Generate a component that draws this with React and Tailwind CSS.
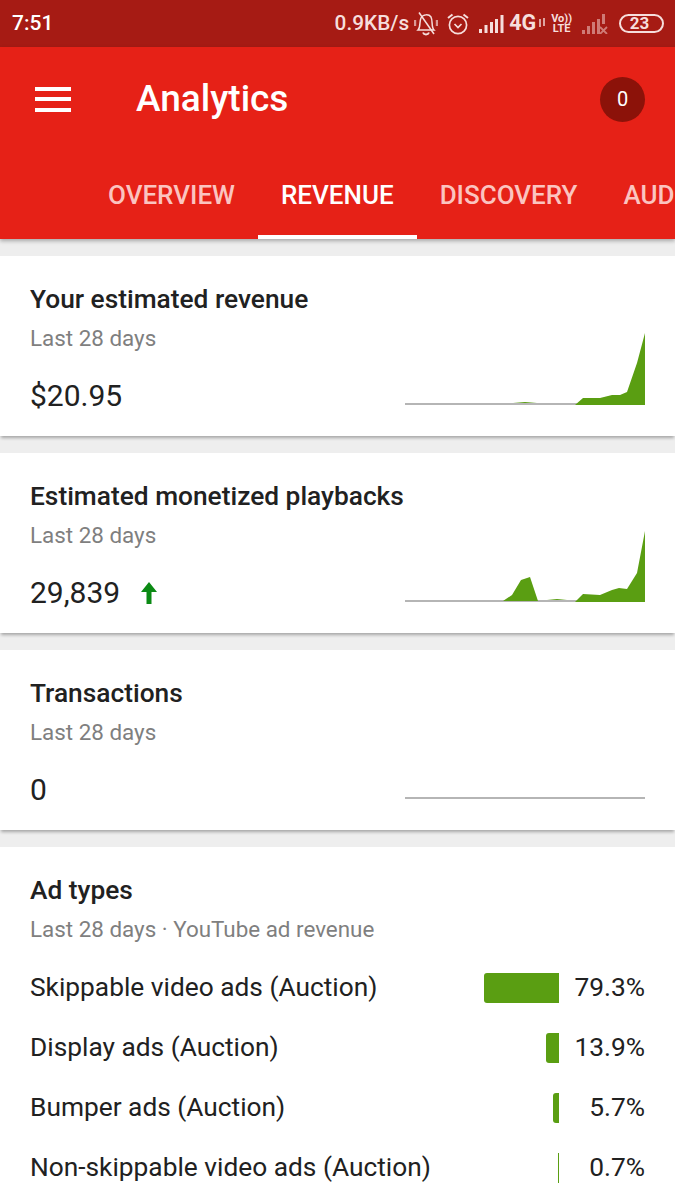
import React from "react";

const TABS = [
  { label: "OVERVIEW" },
  { label: "REVENUE", active: true },
  { label: "DISCOVERY" },
  { label: "AUDIENCE" },
];

const AD_TYPES = [
  { name: "Skippable video ads (Auction)", pct: "79.3%", bar: "w-[75px] rounded-l-[3px]" },
  { name: "Display ads (Auction)", pct: "13.9%", bar: "w-[13px] rounded-l-[3px]" },
  { name: "Bumper ads (Auction)", pct: "5.7%", bar: "w-[6px] rounded-l-[3px]" },
  { name: "Non-skippable video ads (Auction)", pct: "0.7%", bar: "w-px" },
];

// paths are in chart space, 240 wide and 72 tall
const REVENUE_AREA = "M108 70 L120 69 L132 70 Z M170 72 L178 65 L195 65 L207 62 L215 62 L222 59 L232 30 L240 0 L240 72 Z";
const PLAYBACK_AREA = "M98 71 L107 65 L116 50 L125 47 L133 71 Z M142 70 L152 69 L162 70 Z M170 72 L178 64 L195 65 L207 60 L214 58 L222 59 L232 43 L240 1 L240 72 Z";

function Spark({ area }) {
  return (
    <svg width="240" height="72" viewBox="0 0 240 72" className="block">
      <rect x="0" y="70" width="240" height="2" fill="#b5b5b5" />
      {area && <path d={area} fill="#5a9e12" />}
    </svg>
  );
}

function StatusBar() {
  return (
    <div className="h-[47px] bg-[#a61b14] flex items-center text-[#f6dedc] font-medium">
      <span className="ml-[12px] text-[21px] text-white">7:51</span>
      <div className="ml-auto flex items-center mr-[11px]">
        <span className="text-[20.8px] mr-[5px]">0.9KB/s</span>
        {/* muted bell */}
        <svg width="24" height="26" viewBox="0 0 24 26" fill="none" stroke="#f6dedc" strokeWidth="1.5" className="mr-[8px]">
          <path d="M4 19 C7 16 5 11 7 7 C9 3 15 3 17 6 C19 10 17 16 20 19 Z" />
          <path d="M9 21.5 C10 24 14 24 15 21.5" strokeWidth="2" />
          <path d="M5 1.5 L20 23" />
          <path d="M1 9 V15 M23 9 V15" strokeWidth="2.4" opacity="0.65" />
        </svg>
        {/* alarm */}
        <svg width="24" height="24" viewBox="0 0 24 24" fill="none" stroke="#f6dedc" strokeWidth="1.7" className="mr-[9px]">
          <circle cx="12" cy="13" r="8.6" />
          <path d="M8.5 12 L12 15.5 L15.5 12" />
          <path d="M2 6 L6.5 2.5 M22 6 L17.5 2.5" strokeWidth="2" />
        </svg>
        {/* signal */}
        <svg width="25" height="18" viewBox="0 0 25 18" fill="#f6dedc" className="mr-[5px]">
          <rect x="0" y="14" width="3" height="4" />
          <rect x="5.5" y="10" width="3" height="8" />
          <rect x="11" y="7" width="3" height="11" />
          <rect x="16" y="4" width="3" height="14" />
          <rect x="21.5" y="0" width="3" height="18" />
        </svg>
        <span className="text-[21.5px] font-bold">4G</span>
        {/* up and down arrows next to 4G */}
        <svg width="8" height="9" viewBox="0 0 8 9" fill="none" stroke="#f6dedc" strokeWidth="1.4" className="ml-[2px] mr-[5px] self-end mb-[13px]">
          <path d="M2 9 V1 M6 0 V8" />
        </svg>
        <div className="flex flex-col items-center leading-[10px] text-[11px] font-bold mr-[10px]">
          <span>Vo))</span>
          <span>LTE</span>
        </div>
        {/* second signal, no service */}
        <svg width="26" height="20" viewBox="0 0 26 20" fill="#cf7b76" className="mr-[11px]">
          <rect x="0" y="16" width="3" height="4" />
          <rect x="5" y="12" width="3" height="8" />
          <rect x="10" y="8" width="3" height="12" />
          <rect x="15" y="5" width="3" height="15" />
          <rect x="20" y="0" width="3" height="10" />
          <path d="M18 13 L25 20 M25 13 L18 20" stroke="#cf7b76" strokeWidth="1.8" />
        </svg>
        <div className="w-[45px] h-[19px] border-2 border-[#f6dedc] rounded-full flex items-center justify-center text-[17px] leading-none font-bold pr-[4px]">
          23
        </div>
      </div>
    </div>
  );
}

function Header() {
  return (
    <div className="bg-[#e62117] relative z-10 shadow-[0_2px_4px_rgba(0,0,0,0.3)] h-[192px] flex flex-col">
      <div className="flex items-center h-[104px]">
        <div className="ml-[35px] w-[36px] flex flex-col gap-[6.5px]">
          <div className="h-[4px] bg-white" />
          <div className="h-[4px] bg-white" />
          <div className="h-[4px] bg-white" />
        </div>
        <span className="ml-[65px] text-[37px] font-medium text-white">Analytics</span>
        <div className="ml-auto mr-[30px] w-[45px] h-[45px] rounded-full bg-[#8c1209] flex items-center justify-center text-white text-[20px]">
          0
        </div>
      </div>
      <div className="mt-auto flex pl-[85px] overflow-hidden whitespace-nowrap">
        {TABS.map((tab) => (
          <div
            key={tab.label}
            className={`h-[75px] px-[23px] pb-[8px] flex items-center text-[26px] font-medium border-b-[4px] ${
              tab.active ? "text-white border-white" : "text-[#fbc4c0] border-transparent"
            }`}
          >
            {tab.label}
          </div>
        ))}
      </div>
    </div>
  );
}

function MetricCard({ title, value, area, up }) {
  return (
    <div className="bg-white h-[180px] pl-[30px] pr-[30px] pt-[27px] flex shadow-[0_3px_3px_-1px_rgba(0,0,0,0.3)] relative">
      <div className="flex-1 min-w-0">
        <div className="text-[26.3px] leading-[33px] font-medium text-[#212121] whitespace-nowrap">{title}</div>
        <div className="mt-[7px] text-[22.4px] leading-[30px] text-[#7f7f7f]">Last 28 days</div>
        <div className="mt-[23px] flex items-center gap-[21px] text-[30px] leading-[40px] text-[#212121]">
          {value}
          {up && (
            <svg width="16" height="22" viewBox="0 0 16 22" fill="#0b8a14">
              <path d="M8 0 L16 10 H10.5 V22 H5.5 V10 H0 Z" />
            </svg>
          )}
        </div>
      </div>
      <div className="mt-[50px]">
        <Spark area={area} />
      </div>
    </div>
  );
}

function AdTypes() {
  return (
    <div className="bg-white flex-1 px-[30px] pt-[27px]">
      <div className="text-[26.3px] leading-[33px] font-medium text-[#212121]">Ad types</div>
      <div className="mt-[7px] text-[22.4px] leading-[30px] text-[#7f7f7f]">Last 28 days · YouTube ad revenue</div>
      <div className="mt-[14px] flex flex-col">
        {AD_TYPES.map((row) => (
          <div key={row.name} className="h-[60px] flex items-center text-[26.3px] text-[#212121]">
            <span className="whitespace-nowrap">{row.name}</span>
            <div className="ml-auto flex items-center">
              <div className={`h-[30px] bg-[#5a9e12] ${row.bar}`} />
              <span className="w-[86px] text-right">{row.pct}</span>
            </div>
          </div>
        ))}
      </div>
    </div>
  );
}

export default function App() {
  return (
    <div className="w-[675px] h-[1200px] overflow-hidden flex flex-col bg-[#eeeeee] font-['Roboto',sans-serif]">
      <StatusBar />
      <Header />
      <div className="flex-1 flex flex-col gap-[17px] pt-[17px] min-h-0">
        <MetricCard title="Your estimated revenue" value="$20.95" area={REVENUE_AREA} />
        <MetricCard title="Estimated monetized playbacks" value="29,839" area={PLAYBACK_AREA} up />
        <MetricCard title="Transactions" value="0" />
        <AdTypes />
      </div>
    </div>
  );
}
